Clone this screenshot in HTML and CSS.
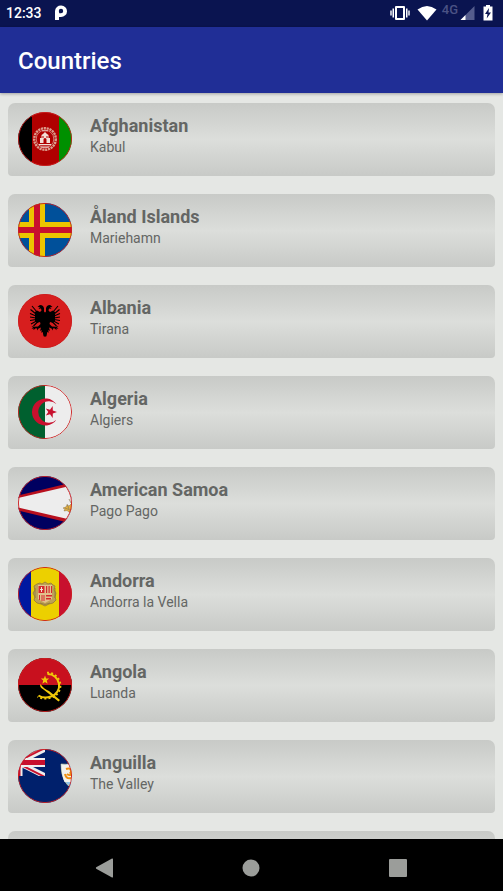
FILE: index.html
```html
<!DOCTYPE html>
<html lang="en">
<head>
<meta charset="utf-8">
<meta name="viewport" content="width=device-width, initial-scale=1">
<title>Countries</title>
<link rel="stylesheet" href="styles.css">
</head>
<body>
<div class="status">
  <span class="clock">12:33</span>
  <svg class="logo" width="12" height="16" viewBox="0 0 12 16"><path fill="#fff" fill-rule="evenodd" d="M0 15V6a6 5.700 0 1 1 6 6H4v3zM4.300 8.200H6A2.200 2.200 0 1 0 3.800 6z"/></svg>
  <span class="spacer"></span>
  <svg class="vibrate" width="20" height="16" viewBox="0 0 20 16"><g fill="#fff"><path fill-rule="evenodd" d="M6 1h8q1 0 1 1v12q0 1-1 1H6q-1 0-1-1V2q0-1 1-1zm1 2v10h6V3z"/><path d="M2.500 3.500H4v9H2.500zM16 3.500h1.500v9H16zM.3 5.500h1.400v5H.3zM18.300 5.500h1.400v5h-1.400z"/></g></svg>
  <svg class="wifi" width="20" height="16" viewBox="0 0 20 16"><path fill="#fff" d="M.5 4.500Q10-2.500 19.500 4.500L10 15.500z"/></svg>
  <span class="network">4G</span>
  <svg class="signal" width="15" height="16" viewBox="0 0 15 16"><path fill="#555d8d" d="M14.500 1v14H.5z"/><path fill="#fff" d="M5.500 10v5H.5z"/></svg>
  <svg width="10" height="16" viewBox="0 0 10 16"><path fill="#fff" d="M3 0h4v1.500h2.500v14h-9v-14H3z"/><path fill="#0a1450" d="M6 3 2 9h2.500L3.700 13.500 8 7.500H5.500z"/></svg>
</div>
<header class="appbar"><h1>Countries</h1></header>
<main class="content">
<ul class="list">
  <li class="card">
    <svg class="flag" viewBox="0 0 54 54">
      <defs><clipPath id="round"><circle cx="27" cy="27" r="27"/></clipPath></defs>
      <g clip-path="url(#round)">
        <path d="M0 0h14v54H0z"/><path fill="#b00000" d="M14 0h27v54H14z"/><path fill="#009000" d="M41 0h13v54H41z"/>
        <circle cx="27" cy="27" r="10.800" fill="none" stroke="#dc9c8c" stroke-width="2.400" stroke-dasharray="2.200 .7"/>
        <circle cx="27" cy="27" r="8.800" fill="none" stroke="#e8cdc2" stroke-width=".6"/>
        <path fill="#f2dfd7" d="M22 31v-5h1.500v-3l1.500-1 2-2 2 2 1.500 1v3H32v5zM21 32h12v1.200H21zM23 34.500h8v1h-8z"/>
        <path fill="#b00000" d="M25.500 31v-3.500a1.500 1.500 0 0 1 3 0V31zM24.500 24h1v2h-1zM28.500 24h1v2h-1z"/>
        <path fill="#f2dfd7" d="M24 18.500h6v.8h-6z"/>
        <circle class="rim" cx="27" cy="27" r="26.600"/>
      </g>
    </svg>
    <div class="text"><h2>Afghanistan</h2><p>Kabul</p></div>
  </li>
  <li class="card">
    <svg class="flag" viewBox="0 0 54 54"><g clip-path="url(#round)">
      <path fill="#00509a" d="M0 0h54v54H0z"/>
      <path fill="#ecc500" d="M11 0h16v19h27v16H27v19H11V35H0V19h11z"/>
      <path fill="#c8102e" d="M16 0h6v24h32v6H22v24h-6V30H0v-6h16z"/>
      <circle class="rim" cx="27" cy="27" r="26.600"/>
    </g></svg>
    <div class="text"><h2>Åland Islands</h2><p>Mariehamn</p></div>
  </li>
  <li class="card">
    <svg class="flag" viewBox="0 0 54 54"><g clip-path="url(#round)">
      <path fill="#d71e1e" d="M0 0h54v54H0z"/>
      <g id="half-eagle">
        <path d="M27.300 19 26 17.500V14q-.5-2.500-3-3l-1.500.2L19.500 13l2.500.2-1.500 1.800 2.500-.4.5 1.900-1.500 1.500-3-1.500L17 18v9l2 2 3-1 .5 2-2.500 2.500-4 .2-2.500-.7 1.500 1.500-1.500 1.200 2.300-.2-.5 1.700 2.400-2 1.300.3.300 2 1.200-2 2.500-1-1 3.500 1.700-1-.4 2.800 1.500-.8.5 3.200.5 1.300h1.500z"/>
        <path fill="none" stroke="#000" stroke-width="1.100" d="m19 18-5-6m4 8-5.500-4.500M18 22l-6-2.500M18 24l-6-1m6 2.500-6 1m6.500.5-5.500 3m6.500-2-4 4"/>
      </g>
      <use href="#half-eagle" transform="translate(54 0) scale(-1 1)"/>
      <circle class="rim" cx="27" cy="27" r="26.600"/>
    </g></svg>
    <div class="text"><h2>Albania</h2><p>Tirana</p></div>
  </li>
  <li class="card">
    <svg class="flag" viewBox="0 0 54 54"><g clip-path="url(#round)">
      <path fill="#ededed" d="M27 0h27v54H27z"/><path fill="#00602f" d="M0 0h27v54H0z"/>
      <path fill="#c8102e" d="M38.500 19.200A13.500 13.500 0 1 0 38.500 34.800 10.800 10.800 0 1 1 38.500 19.200z"/>
      <path fill="#c8102e" d="m39 27-4.200 1.400-.1 4.500-2.700-3.600-4.200 1.300 2.500-3.600-2.500-3.600 4.200 1.300 2.700-3.600.1 4.500z"/>
      <circle class="rim" cx="27" cy="27" r="26.600"/>
    </g></svg>
    <div class="text"><h2>Algeria</h2><p>Algiers</p></div>
  </li>
  <li class="card">
    <svg class="flag" viewBox="0 0 54 54"><g clip-path="url(#round)">
      <path fill="#000060" d="M0 0h54v54H0z"/>
      <path fill="#b8101e" d="M0 19.500 54 6.500v41L0 34.500z"/>
      <path fill="#ededed" d="M0 22 54 9.500v34.500L0 31.500z"/>
      <path fill="#e6b23c" stroke="#765c35" stroke-width=".4" d="M54 27 51 30l-2-1-1 2-3 1 2 1-1 2 3-.5 2 1.500 3-1z"/>
      <path fill="none" stroke="#8d7a59" stroke-width=".7" d="m51 23 2 4m-4 1 2 5m-4-1 5 2"/>
      <circle class="rim" cx="27" cy="27" r="26.600"/>
    </g></svg>
    <div class="text"><h2>American Samoa</h2><p>Pago Pago</p></div>
  </li>
  <li class="card">
    <svg class="flag" viewBox="0 0 54 54"><g clip-path="url(#round)">
      <path fill="#0018a0" d="M0 0h13v54H0z"/><path fill="#ecd000" d="M13 0h28v54H13z"/><path fill="#c8102e" d="M41 0h13v54H41z"/>
      <path fill="#bda256" stroke="#957936" stroke-width=".8" d="m19 17 3-1 2 1 3-2 3 2 3-1 2 2 2 1-1 4 2 3-1 4 1 3-3 3-4 1-4 2-4-2-4-1-3-3 1-3-2-4 2-3-1-4z"/>
      <path fill="#e2c18c" d="M20 18h14v14l-7 4-7-4z"/>
      <path fill="#d52a2e" d="M20.500 19h6v7h-6zM28 19h1.200v7H28zM30.500 19h1.200v7h-1.200zM33 19h1v7h-1zM21 28h1v5h-1zM23.500 28h1v6h-1zM25.500 28h1v6h-1zM28 28h6v1.500h-6zM28 31h5v1.500h-5z"/>
      <path fill="#f2e4d4" d="M22 22h3v1h-3zM23 20h1v5h-1z"/><path fill="none" stroke="#88713b" stroke-width=".7" d="M17 21v10m20-10v10M22 36q5 3 10 0"/>
      <circle class="rim" cx="27" cy="27" r="26.600"/>
    </g></svg>
    <div class="text"><h2>Andorra</h2><p>Andorra la Vella</p></div>
  </li>
  <li class="card">
    <svg class="flag" viewBox="0 0 54 54"><g clip-path="url(#round)">
      <path d="M0 0h54v54H0z"/><path fill="#c8101e" d="M0 0h54v27H0z"/>
      <path fill="none" stroke="#f0c808" stroke-width="2" d="M29.500 16A11.500 11.500 0 0 1 33 38.500Q26 41 20.500 37.500"/>
      <path fill="none" stroke="#f0c808" stroke-width="1.800" stroke-dasharray="2 2.200" d="M29 14.700A12.800 12.800 0 0 1 33.500 39.700Q26 42 19.500 38.700"/>
      <path fill="#f0c808" d="m27 17.500 1.100 3 3.100.1-2.400 2 .8 3.100-2.600-1.800-2.600 1.800.8-3.100-2.400-2 3.100-.1z"/>
      <path fill="#f0c808" d="M22.500 26q-1.500 3 3 5.500L40.500 43.500 42 42l-11-9q-5.500-2-8.500-7z"/>
      <circle class="rim" cx="27" cy="27" r="26.600"/>
    </g></svg>
    <div class="text"><h2>Angola</h2><p>Luanda</p></div>
  </li>
  <li class="card">
    <svg class="flag" viewBox="0 0 54 54">
      <defs><clipPath id="canton"><path d="M0 0h27v27H0z"/></clipPath></defs>
      <g clip-path="url(#round)">
      <path fill="#00206c" d="M0 0h54v54H0z"/>
      <g clip-path="url(#canton)">
        <path stroke="#eee" stroke-width="5.500" d="m0 13.500 27-13.500M0 13.500 27 27"/>
        <path stroke="#c8102e" stroke-width="2" d="m0 12.500 27-13.500M0 14.500 27 28"/>
        <path fill="#eee" d="M0 9h27v9H0zM0 0h4.500v27H0z"/><path fill="#c8102e" d="M0 11h27v5H0zM0 0h2.500v27H0z"/>
      </g>
      <path fill="#8fc4ea" stroke="#d8d58c" stroke-width=".6" d="M43 15q6 1 11-1v25q-11-5-11-24z"/>
      <path fill="#f2f2ed" d="M43.300 15.300q6 1 10.700-1V33h-7.500q-3-7-3.200-17.700z"/>
      <path fill="none" stroke="#f09010" stroke-width="2" d="M48 20q5-2 5 3t-4 2m-2 0q1 5 6 4m-1-6 2 4"/>
      <circle class="rim" cx="27" cy="27" r="26.600"/>
    </g></svg>
    <div class="text"><h2>Anguilla</h2><p>The Valley</p></div>
  </li>
  <li class="card" aria-hidden="true"></li>
</ul>
</main>
<nav class="navbar">
  <button type="button" aria-label="Back"><svg width="20" height="20" viewBox="0 0 20 20"><path d="M1.200 9.300Q.5 10 1.200 10.700L17 19.500q1 .3 1-.8V1.300q0-1.100-1-.8z"/></svg></button>
  <button type="button" aria-label="Home"><svg width="20" height="20" viewBox="0 0 20 20"><circle cx="10" cy="10" r="8.500"/></svg></button>
  <button type="button" aria-label="Recent apps"><svg width="20" height="20" viewBox="0 0 20 20"><rect x="1" y="1" width="18" height="18" rx="1"/></svg></button>
</nav>
</body>
</html>
```
FILE: styles.css
```css
* { box-sizing: border-box; }
body {
  margin: 0;
  height: 100vh;
  display: flex;
  flex-direction: column;
  overflow: hidden;
  background: #e5e7e4;
  font-family: Roboto, "Liberation Sans", sans-serif;
}
h1, h2, p, ul { margin: 0; padding: 0; }
svg { display: block; flex: none; }

.status {
  flex: none;
  display: flex;
  align-items: center;
  height: 27px;
  padding: 0 10px 2px 6px;
  background: #0a1450;
  color: #fff;
}
.clock { font-size: 14px; font-weight: 500; line-height: 16px; }
.logo { margin-left: 13px; }
.spacer { flex: 1; }
.vibrate { margin-right: 7px; }
.wifi { margin-right: 5px; }
.network {
  height: 20px;
  font-size: 13px;
  font-weight: 500;
  line-height: 14px;
  color: #4a5284;
}
.signal { margin: 0 8px 0 2px; }

.appbar {
  flex: none;
  display: flex;
  align-items: center;
  height: 66px;
  padding: 2px 18px 0;
  background: #202e96;
  color: #fff;
  box-shadow: 0 1px 3px rgba(0, 0, 0, 0.3);
  z-index: 1;
}
.appbar h1 { font-size: 24px; font-weight: 500; line-height: 32px; }

.content { flex: 1; min-height: 0; overflow: hidden; }
.list {
  display: grid;
  grid-auto-rows: 73px;
  gap: 18px;
  padding: 10px 8px 0;
  list-style: none;
}
.card {
  display: flex;
  gap: 18px;
  padding: 9px 10px;
  border-radius: 7px 7px 4px 4px;
  background: linear-gradient(#c8cac7, #dcdedb 50%, #c8cac7);
}
.flag { width: 54px; height: 54px; }
.rim { fill: none; stroke: #cc2020; stroke-width: 1; }
.text { padding-top: 3px; color: #646664; }
.text h2 { font-size: 18px; font-weight: 700; line-height: 22px; }
.text p { font-size: 14px; line-height: 20px; }

.navbar {
  flex: none;
  display: flex;
  height: 52px;
  padding: 0 32px;
  background: #000;
}
.navbar button {
  flex: 1;
  display: flex;
  align-items: center;
  justify-content: center;
  padding: 5px 0 0;
  border: 0;
  background: none;
}
.navbar svg { fill: #9b9d9a; }
```
